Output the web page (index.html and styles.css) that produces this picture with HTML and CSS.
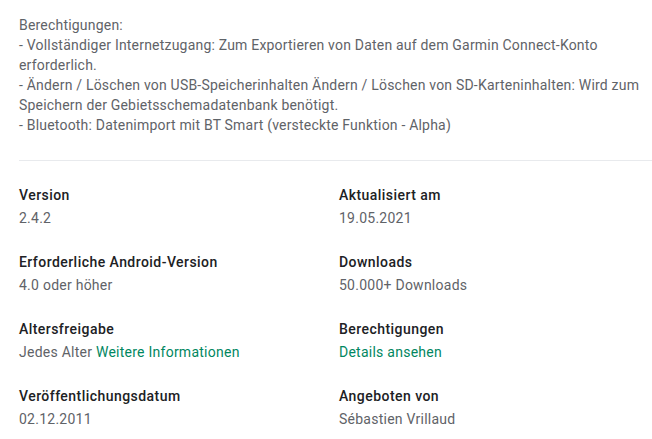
FILE: index.html
```html
<!DOCTYPE html>
<html lang="de">
<head>
<meta charset="utf-8">
<link rel="stylesheet" href="styles.css">
</head>
<body>
<div class="page">
  <p class="desc">Berechtigungen:<br>- Vollständiger Internetzugang: Zum Exportieren von Daten auf dem Garmin Connect-Konto erforderlich.<br>- Ändern / Löschen von USB-Speicherinhalten Ändern / Löschen von SD-Karteninhalten: Wird zum Speichern der Gebietsschemadatenbank benötigt.<br>- Bluetooth: Datenimport mit BT Smart (versteckte Funktion - Alpha)</p>
  <hr class="divider">
  <div class="grid">
    <div class="item"><div class="label">Version</div><div class="value">2.4.2</div></div>
    <div class="item"><div class="label">Aktualisiert am</div><div class="value">19.05.2021</div></div>
    <div class="item"><div class="label">Erforderliche Android-Version</div><div class="value">4.0 oder höher</div></div>
    <div class="item"><div class="label">Downloads</div><div class="value">50.000+ Downloads</div></div>
    <div class="item"><div class="label">Altersfreigabe</div><div class="value">Jedes Alter <a class="link" href="#">Weitere Informationen</a></div></div>
    <div class="item"><div class="label">Berechtigungen</div><div class="value"><a class="link" href="#">Details ansehen</a></div></div>
    <div class="item"><div class="label">Veröffentlichungsdatum</div><div class="value">02.12.2011</div></div>
    <div class="item"><div class="label">Angeboten von</div><div class="value">Sébastien Vrillaud</div></div>
  </div>
</div>
</body>
</html>
```
FILE: styles.css
```css
html, body {
  margin: 0;
  padding: 0;
  background: #ffffff;
}
.page {
  padding: 15px 0 0 19px;
  font-family: Roboto, "Liberation Sans", sans-serif;
  font-size: 14px;
  line-height: 20px;
  color: #5f6368;
}
.desc {
  margin: 0;
  padding-right: 10px;
  letter-spacing: 0.2px;
}
.divider {
  border: 0;
  border-top: 1px solid #e8eaed;
  margin: 25px 0 0 0;
  height: 0;
}
.grid {
  display: grid;
  grid-template-columns: 320px 1fr;
  row-gap: 24px;
  padding-top: 24px;
}
.label {
  font-family: Roboto, "Liberation Sans", sans-serif;
  font-weight: 500;
  color: #202124;
  line-height: 20px;
  letter-spacing: 0.45px;
}
.value {
  margin-top: 3px;
  line-height: 20px;
  letter-spacing: 0.25px;
}
.link {
  color: #01875f;
  text-decoration: none;
}
```
